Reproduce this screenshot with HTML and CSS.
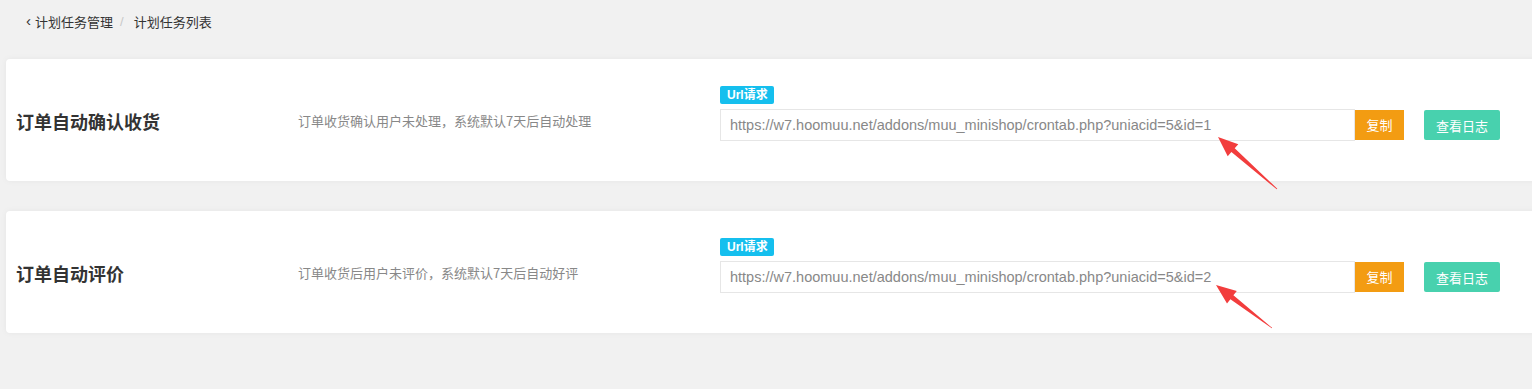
FILE: index.html
```html
<!DOCTYPE html>
<html lang="zh-CN">
<head>
    <meta charset="UTF-8">
    <meta name="viewport" content="width=device-width, initial-scale=1.0">
    <title>计划任务列表</title>
    <link rel="stylesheet" href="styles.css">
</head>
<body>
    <div class="breadcrumb">
        <span class="back">&lsaquo;</span>
        <a href="#">计划任务管理</a>
        <span class="sep">/</span>
        <span class="current">计划任务列表</span>
    </div>

    <div class="task-list">
        <div class="task-card">
            <div class="task-title">订单自动确认收货</div>
            <div class="task-desc">订单收货确认用户未处理，系统默认7天后自动处理</div>
            <div class="task-url">
                <span class="badge">Url请求</span>
                <div class="url-row">
                    <input class="url-input" type="text" value="https://w7.hoomuu.net/addons/muu_minishop/crontab.php?uniacid=5&amp;id=1" readonly>
                    <button class="btn btn-copy">复制</button>
                </div>
            </div>
            <button class="btn btn-log">查看日志</button>
        </div>

        <div class="task-card">
            <div class="task-title">订单自动评价</div>
            <div class="task-desc">订单收货后用户未评价，系统默认7天后自动好评</div>
            <div class="task-url">
                <span class="badge">Url请求</span>
                <div class="url-row">
                    <input class="url-input" type="text" value="https://w7.hoomuu.net/addons/muu_minishop/crontab.php?uniacid=5&amp;id=2" readonly>
                    <button class="btn btn-copy">复制</button>
                </div>
            </div>
            <button class="btn btn-log">查看日志</button>
        </div>
    </div>

    <!-- annotation arrows drawn over the screenshot -->
    <svg class="marks" width="1532" height="389" viewBox="0 0 1532 389">
        <polygon fill="#f23d3d" points="1218,137 1238.3,144.2 1234.7,148.3 1277.3,188.7 1276.7,189.3 1231.4,152.1 1227.7,156.2"/>
        <polygon fill="#f23d3d" points="1216,285 1236.8,290.9 1233.4,295.2 1272.2,327.8 1271.8,328.2 1230.4,299.2 1227,303.5"/>
    </svg>
</body>
</html>
```

FILE: styles.css
```css
html, body {
    margin: 0;
    padding: 0;
}
body {
    font-family: "Liberation Sans", "Noto Sans CJK SC", sans-serif;
    background-color: #f1f1f1;
    color: #333;
    overflow: hidden;
    position: relative;
    height: 389px;
}
.breadcrumb {
    height: 42px;
    padding-left: 26px;
    display: flex;
    align-items: center;
    font-size: 13px;
    color: #333;
}
.breadcrumb a {
    color: #333;
    text-decoration: none;
}
.back {
    font-size: 15px;
    margin-right: 4px;
    margin-top: -2px;
}
.sep {
    color: #c8c8c8;
    margin: 0 10px 0 7px;
}
.task-list {
    padding: 17px 0 0 6px;
    display: flex;
    flex-direction: column;
    gap: 30px;
    margin-right: -30px;
}
.task-card {
    height: 122px;
    background-color: white;
    border-radius: 4px;
    box-shadow: 0 0 6px rgba(0, 0, 0, 0.05);
    display: flex;
    align-items: center;
    padding-left: 10px;
}
.task-title {
    width: 282px;
    font-family: "Noto Sans CJK SC", sans-serif;
    font-size: 18px;
    font-weight: bold;
    color: #333;
    margin-top: 2px;
}
.task-desc {
    width: 422px;
    font-family: "Noto Sans CJK SC", sans-serif;
    font-size: 13px;
    color: #888;
}
.task-url {
    display: flex;
    flex-direction: column;
    align-items: flex-start;
    gap: 5px;
    margin-bottom: 14px;
}
.badge {
    background-color: #15bfee;
    color: white;
    font-size: 12px;
    font-weight: bold;
    height: 18px;
    line-height: 18px;
    padding: 0 6px 0 7px;
    border-radius: 2px;
}
.url-row {
    display: flex;
    align-items: center;
}
.url-input {
    width: 635px;
    height: 32px;
    box-sizing: border-box;
    border: 1px solid #e6e6e6;
    padding: 0 9px;
    font-family: "Liberation Sans", sans-serif;
    font-size: 14.5px;
    color: #888;
    outline: none;
}
.btn {
    border: none;
    color: white;
    font-family: "Noto Sans CJK SC", sans-serif;
    font-size: 13px;
    height: 30px;
    cursor: pointer;
}
.btn-copy {
    width: 49px;
    background-color: #f39c12;
}
.btn-log {
    width: 76px;
    background-color: #48d1ae;
    border-radius: 2px;
    margin-left: 20px;
    margin-top: 10px;
}
.marks {
    position: absolute;
    top: 0;
    left: 0;
    pointer-events: none;
}
```
